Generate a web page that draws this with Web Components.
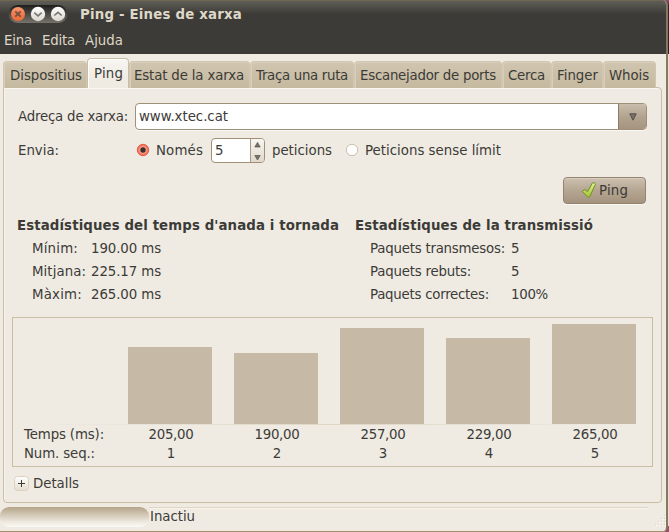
<!DOCTYPE html>
<html lang="ca"><head><meta charset="utf-8"><title>Ping - Eines de xarxa</title>
<style>html,body{margin:0;width:669px;height:532px;overflow:hidden;background:#efebe3}body{font:13.33px/16px "DejaVu Sans",sans-serif;color:#3c3b37}</style></head><body>
<net-window></net-window>
<script>
const define=(name,css,html,ready)=>customElements.define(name,class extends HTMLElement{
  connectedCallback(){
    if(this.shadowRoot)return;
    const root=this.attachShadow({mode:'open'});
    root.innerHTML=`<style>*{box-sizing:border-box}${css}</style>${typeof html==='function'?html(this):html}`;
    if(ready)ready(this,root);
  }
});
// Label whose tracking is adjusted so that it spans the given width.
define('fit-label',':host{display:block;white-space:nowrap;flex:none}span{display:inline-block;white-space:pre}','<span><slot></slot></span>',(el,root)=>{
  const w=+el.getAttribute('w');if(!w)return;
  const s=root.querySelector('span'),n=el.textContent.length;
  s.style.letterSpacing=((w-s.getBoundingClientRect().width)/n)+'px';
});
define('window-controls',':host{display:block;width:60px;height:20px}svg{display:block}',`<svg width="60" height="20" viewBox="8 4 60 20">
<defs><linearGradient id="p" x2="0" y2="1"><stop stop-color="#1f1e1b"/><stop offset="1" stop-color="#75736b"/></linearGradient><linearGradient id="o" x2="0" y2="1"><stop stop-color="#f89a75"/><stop offset=".5" stop-color="#f37b4c"/><stop offset="1" stop-color="#ea6a38"/></linearGradient><linearGradient id="w" x2="0" y2="1"><stop stop-color="#fff"/><stop offset="1" stop-color="#d9d6cc"/></linearGradient></defs>
<rect x="8.5" y="5" width="59" height="18" rx="9" fill="url(#p)"/>
<circle cx="18" cy="14" r="7" fill="url(#o)"/><path d="M15.3 11.3l5.4 5.4m0-5.4l-5.4 5.4" stroke="#70503f" stroke-width="1.8"/>
<circle cx="38" cy="14" r="7.2" fill="url(#w)"/><path d="M34.3 12.7l3.7 3.2 3.7-3.2" fill="none" stroke="#77756e" stroke-width="1.6"/>
<circle cx="58" cy="14" r="7.2" fill="url(#w)"/><path d="M54.3 15.5l3.7-3.2 3.7 3.2" fill="none" stroke="#77756e" stroke-width="1.6"/></svg>`);
define('title-bar',`:host{display:block;height:54px;color:#dfd8c8;background:linear-gradient(#5d5b55 1px,#54534d 4px,#3d3b37 13px,#3c3b37);border-top:1px solid #716650}
.t{display:flex;height:27px;padding:3px 0 0 8px;gap:12px}.t fit-label{font-weight:bold;padding-top:3px}.m{display:flex;gap:10px;padding:5px 0 0 4px}`,
`<div class="t"><window-controls></window-controls><fit-label w="162">Ping - Eines de xarxa</fit-label></div><div class="m"><fit-label w="28">Eina</fit-label><fit-label w="33">Edita</fit-label><fit-label w="38">Ajuda</fit-label></div>`);
define('tab-item',`:host{display:block;flex:none;height:27px;padding:6px 0 0 6px;border:1px solid #d3c6b0;border-bottom:0;border-radius:4px 4px 0 0;background:linear-gradient(#d0c5b0,#c5b99f);box-shadow:inset 1px 1px #d8ceba}
:host([active]){height:30px;padding-top:7px;border-color:#cabda4;background:linear-gradient(#f8f6f2,#efebe3 20px);box-shadow:inset 1px 1px #fff;position:relative;z-index:1}`,'<slot></slot>');
define('tab-strip',':host{display:flex;align-items:flex-end;height:30px;margin-bottom:-1px}','<slot></slot>');
define('tab-panel',':host{display:block;width:659px;height:416px;border:1px solid #c9bda4;border-radius:0 4px 4px 4px;box-shadow:inset 1px 1px #f8f6f1}','<slot></slot>');
define('combo-box',`:host{display:flex;width:512px;height:27px;border:1px solid #a09078;border-radius:4px;background:#fff;overflow:hidden;box-shadow:0 1px #f9f7f3}.x{flex:1;padding:5px 0 0 3px}.b{width:28px;border-left:1px solid #8c7c68;background:linear-gradient(#cbbdac,#b3a48f 50%,#a59580);display:grid;place-items:center}svg{display:block}`,
'<div class="x"><slot></slot></div><div class="b"><svg width="8" height="8"><path d="M.8.8h6.4L4 7.2z" fill="#77716a" stroke="#55504a"/></svg></div>');
define('radio-dot',':host{display:block;width:14px;height:14px;flex:none}svg{display:block}',el=>el.hasAttribute('checked')?
'<svg width="14" height="14"><defs><radialGradient id="r"><stop offset=".3" stop-color="#fbbcae"/><stop offset="1" stop-color="#f5604b"/></radialGradient></defs><circle cx="7" cy="7" r="5.7" fill="url(#r)" stroke="#e4523d" stroke-width=".9"/><circle cx="7" cy="7" r="2.7" fill="#3b302b"/></svg>':
'<svg width="14" height="14"><circle cx="7" cy="7" r="5.7" fill="#fff" stroke="#cbbfad"/></svg>');
define('spin-box',`:host{display:flex;width:54px;height:25px;border:1px solid #a09078;border-radius:4px;background:#fff;overflow:hidden;flex:none}.x{flex:1;padding:4px 0 0 3px}.b{width:14px;border-left:1px solid #a79a84;background:linear-gradient(#f8f6f2,#e0d8ca)}svg{display:block}`,
'<div class="x"><slot></slot></div><div class="b"><svg width="13" height="23"><path d="M3.8 8L6.5 3.4 9.2 8zM3.8 16.5h5.4L6.5 21z" fill="#77726a" stroke="#55504a" stroke-width=".7"/></svg></div>');
define('action-button',`:host{display:flex;width:83px;height:27px;border:1px solid #94836f;border-radius:4px;background:linear-gradient(#cdc0b0,#b5a692 50%,#a4937e);box-shadow:inset 0 1px #d8cdbf,0 1px #f9f7f3;padding:4px 0 0 17px;gap:1px}svg{display:block;flex:none;margin-top:-1px}slot{display:block;padding-top:1px}`,
'<svg width="17" height="18"><defs><linearGradient id="g" x2="0" y2="1"><stop stop-color="#e3f09a"/><stop offset="1" stop-color="#a3c232"/></linearGradient></defs><path d="M1.2 10.4l2.7-1.9 2.6 2.2L11.4 2c.5-.9 3.4.3 3 1.4L8.7 15.6c-.4.9-1.7.9-2.3.1z" fill="url(#g)" stroke="#6d8f20"/></svg><slot></slot>');
define('stat-group',`:host{display:block}h2{font-size:inherit;margin:0;height:23px}.g{display:grid;grid-template-columns:var(--c) auto;grid-auto-rows:23px;padding-left:15px}`,
'<h2><slot name="title"></slot></h2><div class="g"><slot></slot></div>');
define('ping-chart',`:host{display:block;width:641px;height:150px;border:1px solid #c9bda4}.bars,.row{display:grid;grid-template-columns:93px repeat(5,84px);column-gap:22px}.bars{height:106px;align-items:end}.bar{background:#c6b9a6;grid-row:1}.line{height:2px;background:linear-gradient(90deg,#e0d6c400 20px,#e0d6c4 50%,#e0d6c400 630px) 0 0/100% 1px no-repeat}
.row{height:19px;justify-items:center}.row>:first-child{justify-self:start;padding-left:11px}.row>:not(:first-child){padding-left:2px}.rows{padding-top:1px}`,()=>{
 const v=[[205,77],[190,71],[257,96],[229,86],[265,100]];
 return `<div class="bars">${v.map((a,i)=>`<div class="bar" style="height:${a[1]}px;grid-column:${i+2}"></div>`).join('')}</div><div class="line"></div><div class="rows"><div class="row"><fit-label w="80">Temps (ms):</fit-label>${v.map(a=>`<fit-label w="45">${a[0]},00</fit-label>`).join('')}</div><div class="row"><fit-label w="71">Num. seq.:</fit-label>${v.map((a,i)=>`<fit-label>${i+1}</fit-label>`).join('')}</div></div>`});
define('expander-row',`:host{display:flex;gap:4px}svg{display:block;flex:none}`,'<svg width="15" height="15"><defs><linearGradient id="e" x2="0" y2="1"><stop stop-color="#fff"/><stop offset="1" stop-color="#e4dccc"/></linearGradient></defs><rect x=".5" y=".5" width="14" height="14" rx="3" fill="url(#e)" stroke="#ddd2c0"/><path d="M4 7.5h7M7.5 4v7" stroke="#3c3b37"/></svg><slot></slot>');
define('status-bar',`:host{display:flex;height:29px;padding-top:4px}.p{width:149px;height:20px;border-radius:9px;background:linear-gradient(#b4a489,#cfc4b1 35%,#eee9df 75%,#fbfaf7);flex:none}.s{width:499px;border-top:1px solid #e0d5c1;box-shadow:inset 0 1px #f6f3ed;padding:1px 0 0 1px}svg{margin:7px 0 0 7px;flex:none}`,
`<div class="p"></div><div class="s"><slot></slot></div><svg width="11" height="12">${[[9,1],[6,4],[9,4],[3,7],[6,7],[9,7],[0,10],[3,10],[6,10],[9,10]].map(p=>`<path d="M${p[0]} ${p[1]}h1v1h-1z" fill="#ddd4c5"/><path d="M${p[0]+1} ${p[1]+1}h1v1h-1z" fill="#fff"/>`).join('')}</svg>`);
define('net-window',`:host{display:block;width:669px;height:532px;background:linear-gradient(#25231f 54px,#e7e0d4 54px)}
.win{width:668px;height:532px;border-right:2px solid #86775f;border-bottom:1px solid #a08d6f;background:#efebe3;border-radius:0 5px 5px 0;overflow:hidden}
.shade{background:linear-gradient(#985071,#35202d 6px,#25231f 54px,transparent 54px,transparent 526px,#98506f 526px);height:532px}
main{padding:4px 0 0 3px;height:449px}.row{display:flex}.form{padding:15px 0 0 14px}.r1>fit-label{margin-top:6px}.r1 combo-box{margin-left:7px}.r2{padding-top:8px;height:39px}.r2>*{margin-top:5px}.r2 radio-dot{margin-top:5px}.r2 spin-box{margin-top:0}
.act{display:flex;padding:8px 0 0 545px;height:48px}.stats{display:flex;gap:16px;height:99px;padding:1px 0 0 13px}ping-chart{margin:1px 0 0 8px}expander-row{margin:9px 0 0 10px}`,
`<div class="shade"><div class="win"><title-bar></title-bar><main><tab-strip>
<tab-item style="width:84px"><fit-label w="72">Dispositius</fit-label></tab-item>
<tab-item active style="width:42px"><fit-label w="29">Ping</fit-label></tab-item>
<tab-item style="width:121px;padding-left:4px"><fit-label w="110">Estat de la xarxa</fit-label></tab-item>
<tab-item style="width:104px;padding-left:5px"><fit-label w="92">Traça una ruta</fit-label></tab-item>
<tab-item style="width:148px;padding-left:5px"><fit-label w="136">Escanejador de ports</fit-label></tab-item>
<tab-item style="width:49px;padding-left:5px"><fit-label w="37">Cerca</fit-label></tab-item>
<tab-item style="width:52px;padding-left:5px"><fit-label w="41">Finger</fit-label></tab-item>
<tab-item style="width:53px;padding-left:5px"><fit-label w="40">Whois</fit-label></tab-item></tab-strip>
<tab-panel><div class="form"><div class="row r1"><fit-label w="110">Adreça de xarxa:</fit-label><combo-box><fit-label w="89">www.xtec.cat</fit-label></combo-box></div>
<div class="row r2"><fit-label w="41" style="width:118px">Envia:</fit-label><radio-dot checked></radio-dot><fit-label w="47" style="margin-left:6px;width:55px">Només</fit-label><spin-box><fit-label>5</fit-label></spin-box><fit-label w="60" style="margin-left:7px;width:73px">peticions</fit-label><radio-dot></radio-dot><fit-label w="136" style="margin-left:6px">Peticions sense límit</fit-label></div>
<div class="act"><action-button><fit-label w="29">Ping</fit-label></action-button></div></div>
<div class="stats"><stat-group style="--c:59px;width:322px"><fit-label slot="title" w="322">Estadístiques del temps d'anada i tornada</fit-label><fit-label w="46">Mínim:</fit-label><fit-label w="70">190.00 ms</fit-label><fit-label w="54">Mitjana:</fit-label><fit-label w="70">225.17 ms</fit-label><fit-label w="50">Màxim:</fit-label><fit-label w="70">265.00 ms</fit-label></stat-group>
<stat-group style="--c:141px"><fit-label slot="title" w="238">Estadístiques de la transmissió</fit-label><fit-label w="135">Paquets transmesos:</fit-label><fit-label>5</fit-label><fit-label w="101">Paquets rebuts:</fit-label><fit-label>5</fit-label><fit-label w="119">Paquets correctes:</fit-label><fit-label w="37">100%</fit-label></stat-group></div>
<ping-chart></ping-chart><expander-row><fit-label w="46">Detalls</fit-label></expander-row></tab-panel></main><status-bar><fit-label w="45">Inactiu</fit-label></status-bar></div></div>`);
</script></body></html>
